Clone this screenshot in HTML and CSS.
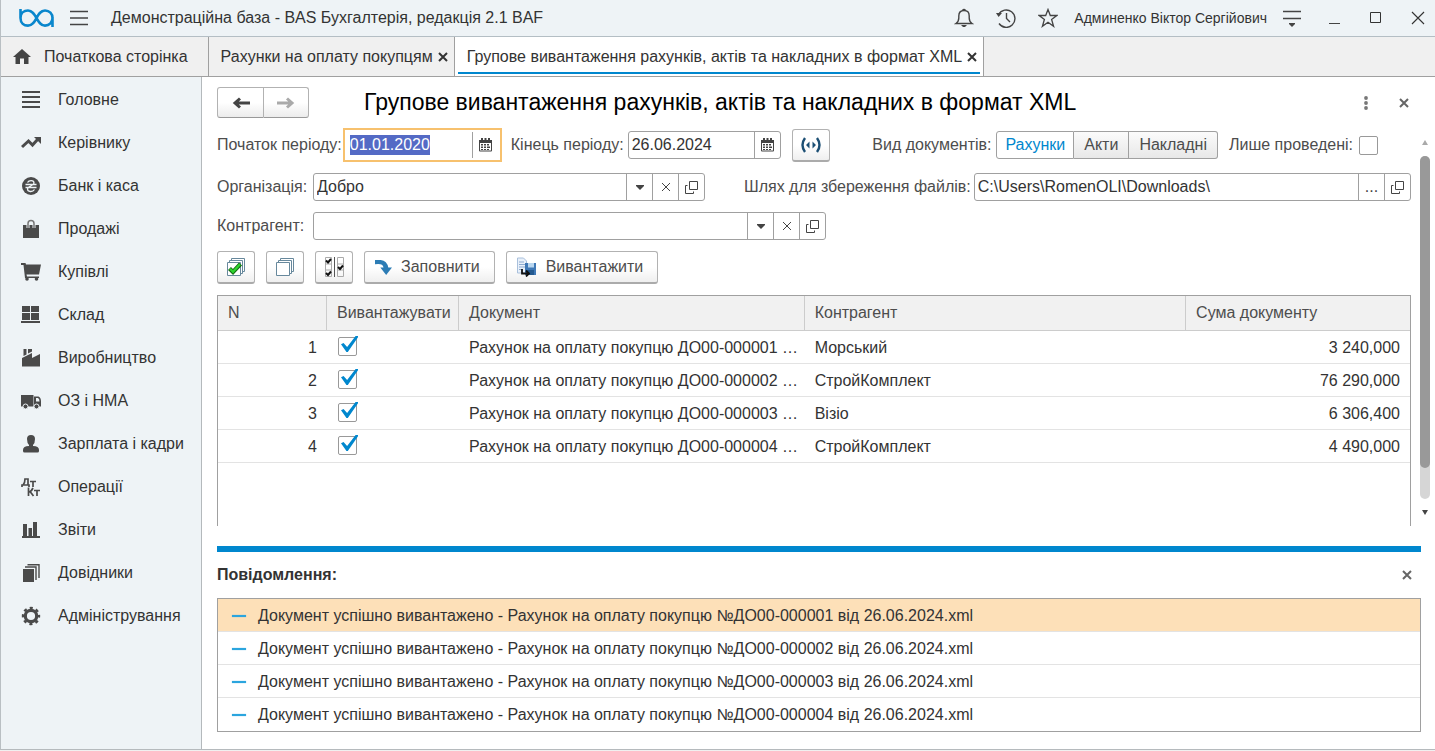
FILE: index.html
```html
<!DOCTYPE html>
<html lang="uk">
<head>
<meta charset="utf-8">
<title>Демонстраційна база - BAS Бухгалтерія, редакція 2.1 BAF</title>
<link rel="stylesheet" href="styles.css">
</head>
<body>
<svg class="sprite" aria-hidden="true">
  <symbol id="x" viewBox="0 0 10 10"><path d="M1 1l8 8M9 1l-8 8" fill="none" stroke="currentColor"/></symbol>
  <symbol id="down" viewBox="0 0 8 5"><path d="M0 0h8v1L4 5 0 1z" fill="currentColor"/></symbol>
  <symbol id="open" viewBox="0 0 13 13"><path d="M4.500 .5h8v8h-8zM2.500 4.500h-2v8h8v-2" fill="none" stroke="currentColor"/></symbol>
  <symbol id="cal" viewBox="0 0 13 14"><path d="M0 2h13v10.500q0 1-1 1H1q-1 0-1-1z" fill="#444"/><path d="M2 0h2v3H2zM5.500 0h2v3h-2zM9 0h2v3H9z" fill="#444"/><path d="M1 5h11v7.500H1z" fill="#fff"/><path d="M5 6h2v1.500H5zM8 6h2v1.500H8zM2 8.500h2V10H2zM5 8.500h2V10H5zM8 8.500h3V10H8zM2 6h2v1.500H2zM2 11h2v1H2zM5 11h2v1H5zM8 11h2v1H8z" fill="#444"/></symbol>
</svg>
<div class="window">
  <header class="titlebar">
    <svg class="logo" width="35" height="18" viewBox="0 0 35 18" fill="none" stroke="#0a87cd" stroke-width="2.600"><path d="M1.500 0v9c0 5 3.500 7.600 7.500 7.600C18 16.600 17 1.500 26 1.500c4.500 0 7.500 3.300 7.500 7.500s-3 7.600-7.500 7.600C17.500 16.600 17.500 1.500 9 1.500 5 1.500 1.500 4 1.500 9M33.500 8v10"/></svg>
    <button class="plain menu" aria-label="Меню"><svg width="18" height="16" viewBox="0 0 18 16"><path d="M0 1.500h18M0 8h18M0 14.500h18" stroke="#444" stroke-width="1.400"/></svg></button>
    <h1 class="app-title">Демонстраційна база - BAS Бухгалтерія, редакція 2.1 BAF</h1>
    <div class="tools">
      <button class="plain" aria-label="Сповіщення"><svg width="20" height="20" viewBox="0 0 20 20" fill="none" stroke="#444" stroke-width="1.400"><path d="M8.500 2.500q1.500-2 3 0M2 15.500h16q-2.800-2-2.800-5.500V8q0-5.500-5.200-5.500T4.800 8v2Q4.800 13.500 2 15.500z"/><path d="M7 17h6l-2 2H9z" fill="#444" stroke="none"/></svg></button>
      <button class="plain" aria-label="Історія"><svg width="20" height="20" viewBox="0 0 20 20" fill="none" stroke="#444" stroke-width="1.400"><path d="M2.600 6.500A8.700 8.700 0 1 1 3 15.500M10.500 5v5.500l3.500 3.500"/><path d="M0 5h6L2.600 9z" fill="#444" stroke="none"/></svg></button>
      <button class="plain" aria-label="Обране"><svg width="20" height="20" viewBox="0 0 20 20" fill="none" stroke="#444" stroke-width="1.300"><path d="M10 1.500l2.300 6h6.500l-5.200 4 2 6.800L10 14.200l-5.600 4.100 2-6.800-5.200-4h6.500z"/></svg></button>
      <span class="user">Админенко Віктор Сергійович</span>
      <button class="plain" aria-label="Налаштування"><svg width="18" height="18" viewBox="0 0 18 18"><path d="M0 2.500h18M0 9.500h18" stroke="#444" stroke-width="1.400"/><path d="M6 14h6v1l-3 3-3-3z" fill="#444"/></svg></button>
    </div>
    <div class="win-buttons">
      <button class="plain" aria-label="Згорнути"><svg width="11" height="12" viewBox="0 0 11 12"><path d="M0 11.500h11" stroke="#444"/></svg></button>
      <button class="plain" aria-label="Розгорнути"><svg width="11" height="11" viewBox="0 0 11 11"><path d="M.5.5h10v10H.5z" fill="none" stroke="#333"/></svg></button>
      <button class="plain" aria-label="Закрити"><svg width="14" height="14" viewBox="0 0 10 10"><path d="M.7.7l8.600 8.600M9.300.7L.7 9.300" stroke="#333" stroke-width=".8"/></svg></button>
    </div>
  </header>

  <nav class="tabs">
    <a class="tab home" href="#"><svg width="18" height="15" viewBox="0 0 18 15"><path d="M9 0l9 8h-2.500v7H11V9.500H7V15H2.500V8H0z" fill="#444"/></svg>Початкова сторінка</a>
    <a class="tab" href="#">Рахунки на оплату покупцям<svg class="tab-x" width="10" height="10"><use href="#x"/></svg></a>
    <a class="tab active" href="#">Групове вивантаження рахунків, актів та накладних в формат XML<svg class="tab-x" width="10" height="10"><use href="#x"/></svg></a>
  </nav>

  <div class="body">
    <nav class="sidebar">
      <a href="#"><svg width="20" height="20" viewBox="0 0 20 20"><path d="M1 2h18M1 7h18M1 12h18M1 17h18" stroke="#4a4a4a" stroke-width="2"/></svg>Головне</a>
      <a href="#"><svg width="20" height="20" viewBox="0 0 20 20"><path d="M1 14l6.500-6 4 4L17 6" fill="none" stroke="#4a4a4a" stroke-width="3"/><path d="M13 4h7v7z" fill="#4a4a4a"/></svg>Керівнику</a>
      <a href="#"><svg width="20" height="20" viewBox="0 0 20 20"><circle cx="10" cy="10" r="9" fill="#4a4a4a"/><path d="M6.500 6.500C8 4 13 4 13 7c0 3-6.500 3-6.500 6s5 3.500 7 .5M4.500 8.500h11M4.500 11.500h11" fill="none" stroke="#eef3f6" stroke-width="1.300"/></svg>Банк і каса</a>
      <a href="#"><svg width="20" height="20" viewBox="0 0 20 20"><path d="M2 6h16v13H2z" fill="#4a4a4a"/><path d="M7 9V4.500q0-3 3-3t3 3V9" fill="none" stroke="#eef3f6" stroke-width="3"/><path d="M7 9V4.500q0-3 3-3t3 3V9" fill="none" stroke="#777" stroke-width="1.500"/></svg>Продажі</a>
      <a href="#"><svg width="20" height="20" viewBox="0 0 20 20"><path d="M0 1h4.500l.5 1.500h15L18 12.500H5.500l.5 2h12V16H4L2.500 3H0z" fill="#4a4a4a"/><circle cx="6" cy="17" r="1.800" fill="#4a4a4a"/><circle cx="15.500" cy="17" r="1.800" fill="#4a4a4a"/></svg>Купівлі</a>
      <a href="#"><svg width="20" height="20" viewBox="0 0 20 20"><path d="M1 1h8v6H1zM10 1h8v6h-8zM1 8h8v7H1zM10 8h8v7h-8zM0 16h19v2H0z" fill="#4a4a4a"/></svg>Склад</a>
      <a href="#"><svg width="20" height="20" viewBox="0 0 20 20"><path d="M1 18.500V10l10-5v5l8-4v12.500zM2.500 1h3v5.500l-3 1.500zM7 1h4v2.500L7 5.500z" fill="#4a4a4a"/></svg>Виробництво</a>
      <a href="#"><svg width="20" height="20" viewBox="0 0 20 20"><path d="M0 4h12.500v11.500H0zM13 5.500h4.500q2.500 1 2.500 5v5h-7z" fill="#4a4a4a"/><path d="M15 7h2q1.500.5 1.500 3.500H15z" fill="#eef3f6"/><g fill="#4a4a4a" stroke="#eef3f6"><circle cx="4.500" cy="15.500" r="2.500"/><circle cx="15.500" cy="15.500" r="2.500"/></g></svg>ОЗ і НМА</a>
      <a href="#"><svg width="20" height="20" viewBox="0 0 20 20"><path d="M6 5q0-4 4-4t4 4-2 6v1q6 0 6 4v1q0 1.500-1.500 1.500h-13Q2 18.500 2 17v-1q0-4 6-4v-1Q6 9 6 5z" fill="#4a4a4a"/></svg>Зарплата і кадри</a>
      <a href="#"><svg width="20" height="20" viewBox="0 0 20 20" fill="none" stroke="#4a4a4a" stroke-width="1.700"><path d="M1 10V8h7v2M2 8q2-2 2-6h3v6M9 4.500h6M12 4.500V10M7.500 10.500V19M8 15q2 0 4-4M9 14.500l3.500 4.500M13 13.500h6M16 13.500V19"/></svg>Операції</a>
      <a href="#"><svg width="20" height="20" viewBox="0 0 20 20"><path d="M2 4h4v12H2zM7.500 8h3.500v8H7.500zM12 2h4v14h-4zM1 16h18v2H1z" fill="#4a4a4a"/></svg>Звіти</a>
      <a href="#"><svg width="20" height="20" viewBox="0 0 20 20"><path d="M2 6h11v13H2z" fill="#4a4a4a"/><path d="M4 4h11v13M6.500 1.800H18V15" fill="none" stroke="#4a4a4a" stroke-width="1.400"/></svg>Довідники</a>
      <a href="#"><svg width="20" height="20" viewBox="0 0 20 20" fill="none" stroke="#4a4a4a"><circle cx="10" cy="10" r="5.700" stroke-width="3.200"/><circle cx="10" cy="10" r="8" stroke-width="2.400" stroke-dasharray="3.100 3.183" stroke-dashoffset="1.550"/></svg>Адміністрування</a>
    </nav>

    <main class="main">
      <div class="heading">
        <div class="nav-pair">
          <button aria-label="Назад"><svg width="18" height="12" viewBox="0 0 18 12" fill="none" stroke="#444" stroke-width="3"><path d="M3 6h15M8 1.500L3 6l5 4.500"/></svg></button>
          <button aria-label="Вперед"><svg width="18" height="12" viewBox="0 0 18 12" fill="none" stroke="#aaa" stroke-width="3"><path d="M0 6h15M10 1.500L15 6l-5 4.500"/></svg></button>
        </div>
        <h2>Групове вивантаження рахунків, актів та накладних в формат XML</h2>
        <button class="plain more" aria-label="Ще"><svg width="4" height="14" viewBox="0 0 4 14" fill="#777"><circle cx="2" cy="2" r="1.900"/><circle cx="2" cy="7" r="1.900"/><circle cx="2" cy="12" r="1.900"/></svg></button>
        <button class="plain form-x" aria-label="Закрити форму"><svg width="10" height="10"><use href="#x"/></svg></button>
      </div>

      <div class="pane">
        <form class="form" onsubmit="return false">
          <div class="row first">
            <label for="from">Початок періоду:</label>
            <div class="field date focused"><input id="from" value="01.01.2020"><button type="button" aria-label="Календар"><svg width="13" height="14"><use href="#cal"/></svg></button></div>
            <label class="to-label" for="to">Кінець періоду:</label>
            <div class="field date"><input id="to" value="26.06.2024"><button type="button" aria-label="Календар"><svg width="13" height="14"><use href="#cal"/></svg></button></div>
            <button class="btn square period" type="button" aria-label="Вибрати період"><svg width="20" height="16" viewBox="0 0 20 16"><path d="M4 1Q-1 8 4 15M16 1q5 7 0 14" fill="none" stroke="#1c4f74" stroke-width="2.400"/><path d="M8.500 4.500v7L5 8zM11.500 4.500v7L15 8z" fill="#1c4f74"/></svg></button>
            <span class="kind" id="kind">Вид документів:</span>
            <div class="segmented" role="group" aria-labelledby="kind"><button type="button" class="on">Рахунки</button><button type="button">Акти</button><button type="button">Накладні</button></div>
            <label class="posted" for="posted">Лише проведені:</label>
            <input class="check" type="checkbox" id="posted">
          </div>
          <div class="row">
            <label class="side" for="org">Організація:</label>
            <div class="field org"><input id="org" value="Добро"><button type="button" aria-label="Список"><svg width="8" height="5"><use href="#down"/></svg></button><button type="button" aria-label="Очистити"><svg width="10" height="10"><use href="#x"/></svg></button><button type="button" aria-label="Відкрити"><svg width="13" height="13"><use href="#open"/></svg></button></div>
            <label class="path-label" for="path">Шлях для збереження файлів:</label>
            <div class="field path"><input id="path" value="C:\Users\RomenOLI\Downloads\"><button type="button" aria-label="Вибрати">...</button><button type="button" aria-label="Відкрити"><svg width="13" height="13"><use href="#open"/></svg></button></div>
          </div>
          <div class="row">
            <label class="side" for="partner">Контрагент:</label>
            <div class="field partner"><input id="partner" value=""><button type="button" aria-label="Список"><svg width="8" height="5"><use href="#down"/></svg></button><button type="button" aria-label="Очистити"><svg width="10" height="10"><use href="#x"/></svg></button><button type="button" aria-label="Відкрити"><svg width="13" height="13"><use href="#open"/></svg></button></div>
          </div>
          <div class="toolbar">
            <button class="btn square" type="button" aria-label="Позначити все"><svg width="18" height="18" viewBox="0 0 18 18" fill="#fff" stroke="#67889c"><path d="M4.500 .5h13v13h-13z"/><path d="M2.500 2.500h13v13h-13z"/><path d="M.5 4.500h13v13H.5z"/><path d="M2.500 10.500l3.500 3.500 7.500-8" fill="none" stroke="#136b13" stroke-width="4.200"/><path d="M3 10.800L6 13.800l7-7.500" fill="none" stroke="#2fd42f" stroke-width="2.200"/></svg></button>
            <button class="btn square" type="button" aria-label="Зняти позначки"><svg width="18" height="18" viewBox="0 0 18 18" fill="#fff" stroke="#67889c"><path d="M4.500 .5h13v13h-13z"/><path d="M2.500 2.500h13v13h-13z"/><path d="M.5 4.500h13v13H.5z"/></svg></button>
            <button class="btn square" type="button" aria-label="Інвертувати"><svg width="19" height="20" viewBox="0 0 19 20" fill="none" stroke="#aaa"><path d="M.5 .5h6v19h-6zM.5 7h6M.5 13h6M12.500 .5h6v19h-6zM12.500 7h6M12.500 13h6"/><path d="M9.500 0v20" stroke="#555"/><path d="M1 3.500L3 5.500 6 2M1 16l2 2 3-3.500M13 10l2 2 3-3.500" stroke="#111" stroke-width="2"/></svg></button>
            <button class="btn" type="button"><svg width="17" height="15" viewBox="0 0 16 14"><path d="M0 0Q11-1.500 12.500 7H16l-5.500 7L5 7h3Q7.500 2.800 0 4z" fill="#2c7cb5"/></svg>Заповнити</button>
            <button class="btn" type="button"><svg width="20" height="20" viewBox="0 0 20 20"><path d="M.5 1h6l3 3v12h-9z" fill="#e8f0fa" stroke="#a9c0dc"/><path d="M2 5h5M2 7.500h6M2 10h6M2 12.500h4" stroke="#8eabd0"/><path d="M8 6h11v12H8z" fill="#3f78b6"/><path d="M11 6h6v4.500h-6z" fill="#b9d6ef"/><path d="M10 13h7v5h-7z" fill="#23598f"/><path d="M5 12v4.500h6M9 13.500l3 3-3 3" fill="none" stroke="#111" stroke-width="1.800"/></svg>Вивантажити</button>
          </div>
          <div class="table-box">
            <table>
              <colgroup><col class="c-n"><col class="c-check"><col class="c-doc"><col class="c-partner"><col class="c-sum"></colgroup>
              <thead><tr><th>N</th><th>Вивантажувати</th><th>Документ</th><th>Контрагент</th><th>Сума документу</th></tr></thead>
              <tbody>
                <tr><td class="num">1</td><td><input class="check" type="checkbox" checked aria-label="Вивантажувати 1"></td><td>Рахунок на оплату покупцю ДО00-000001 …</td><td>Морський</td><td class="num">3 240,000</td></tr>
                <tr><td class="num">2</td><td><input class="check" type="checkbox" checked aria-label="Вивантажувати 2"></td><td>Рахунок на оплату покупцю ДО00-000002 …</td><td>СтройКомплект</td><td class="num">76 290,000</td></tr>
                <tr><td class="num">3</td><td><input class="check" type="checkbox" checked aria-label="Вивантажувати 3"></td><td>Рахунок на оплату покупцю ДО00-000003 …</td><td>Візіо</td><td class="num">6 306,400</td></tr>
                <tr><td class="num">4</td><td><input class="check" type="checkbox" checked aria-label="Вивантажувати 4"></td><td>Рахунок на оплату покупцю ДО00-000004 …</td><td>СтройКомплект</td><td class="num">4 490,000</td></tr>
              </tbody>
            </table>
          </div>
        </form>
        <div class="scroll" aria-hidden="true">
          <svg width="6" height="5" viewBox="0 0 6 5"><path d="M3 0l3 5H0z" fill="#aaa"/></svg>
          <div class="track"><div class="thumb"></div></div>
          <svg width="6" height="5" viewBox="0 0 6 5"><path d="M0 0h6L3 5z" fill="#444"/></svg>
        </div>
      </div>

      <section class="messages">
        <div class="msg-head"><h3>Повідомлення:</h3><button class="plain form-x" aria-label="Закрити повідомлення"><svg width="10" height="10"><use href="#x"/></svg></button></div>
        <ul>
          <li class="selected">Документ успішно вивантажено - Рахунок на оплату покупцю №ДО00-000001 від 26.06.2024.xml</li>
          <li>Документ успішно вивантажено - Рахунок на оплату покупцю №ДО00-000002 від 26.06.2024.xml</li>
          <li>Документ успішно вивантажено - Рахунок на оплату покупцю №ДО00-000003 від 26.06.2024.xml</li>
          <li>Документ успішно вивантажено - Рахунок на оплату покупцю №ДО00-000004 від 26.06.2024.xml</li>
        </ul>
      </section>
    </main>
  </div>
</div>
<script src="script.js"></script>
</body>
</html>
```
FILE: styles.css
```css
* { box-sizing: border-box; }
body {
  margin: 0;
  font: 16px/20px "Liberation Sans", Arial, sans-serif;
  color: #333;
  background: #f0f0f0;
}
.sprite { position: absolute; width: 0; height: 0; }
svg { display: block; flex: none; }
button, input { font: inherit; color: inherit; }
button { padding: 0; }
h1, h2, h3 { margin: 0; font-weight: normal; }
a { color: inherit; text-decoration: none; }
.plain { border: 0; background: none; display: flex; }

.window {
  display: flex;
  flex-direction: column;
  height: calc(100vh - 1px);
  border-left: 1px solid #b9bfc3;
  border-bottom: 1px solid #b5babd;
}

.titlebar {
  display: flex;
  align-items: center;
  height: 37px;
  padding: 0 10px 1px 18px;
  background: #eef3f6;
  border-bottom: 1px solid #b4bec4;
}
.menu { margin: 0 23px 0 16px; }
.app-title { flex: 1; font-size: 16px; }
.tools { display: flex; align-items: center; gap: 22px; }
.user { font-size: 14px; margin: 0 -6px; }
.win-buttons { display: flex; align-items: center; gap: 30px; margin-left: 28px; }

.tabs {
  display: flex;
  height: 40px;
  background: #f0f0f0;
  border-bottom: 1px solid #a0a0a0;
}
.tab {
  display: flex;
  align-items: center;
  padding: 0 6px 0 12px;
  border-right: 1px solid #a0a0a0;
  white-space: nowrap;
}
.home { gap: 13px; padding-right: 20px; }
.tab-x { margin-left: 5px; stroke-width: 2; }
.active {
  position: relative;
  background: #fff;
}
.active::after {
  content: "";
  position: absolute;
  left: 3px;
  right: 3px;
  bottom: 2px;
  height: 2px;
  background: #0087ce;
}

.body { display: flex; flex: 1; min-height: 0; }
.sidebar {
  width: 201px;
  flex: none;
  padding-top: 1px;
  background: #eef3f6;
  border-right: 1px solid #b4b9bc;
}
.sidebar a {
  display: flex;
  align-items: center;
  gap: 17px;
  height: 43px;
  padding-left: 20px;
}

.main {
  flex: 1;
  min-width: 0;
  display: flex;
  flex-direction: column;
  padding: 10px 14px 17px 15px;
  background: #fff;
}
.heading { display: flex; align-items: center; margin-bottom: 10px; }
.heading h2 { flex: 1; margin-left: 55px; font-size: 23px; line-height: 28px; padding-bottom: 2px; color: #000; white-space: nowrap; }
.nav-pair { display: flex; }
.nav-pair button {
  display: grid;
  place-items: center;
  width: 47px;
  height: 31px;
  border: 1px solid #b2b2b2;
  border-bottom-color: #999;
  border-radius: 3px 0 0 3px;
  background: linear-gradient(#fff 50%, #ececec);
}
.nav-pair button + button { width: 45px; border-left-width: 0; border-radius: 0 3px 3px 0; }
.more { margin-right: 31px; }
.form-x { color: #666; stroke-width: 2; }
.heading .form-x { margin-right: 12px; }

.pane { display: flex; flex: 1; min-height: 0; margin-right: -9px; gap: 9px; }
.form {
  flex: 1;
  min-width: 0;
  display: flex;
  flex-direction: column;
  gap: 11px;
}
.row { display: flex; align-items: center; color: #4d4d4d; white-space: nowrap; }
.side { width: 96px; }
.field {
  display: flex;
  height: 28px;
  border: 1px solid #a0a0a0;
  border-radius: 3px;
  background: #fff;
  color: #333;
}
.field input {
  flex: 1;
  min-width: 0;
  padding: 0 0 0 3px;
  border: 0;
  outline: 0;
  background: none;
}
.field input::selection { color: #fff; background: rgba(82, 104, 196, .99); }
.field button {
  display: grid;
  place-items: center;
  width: 26px;
  border: 0;
  border-left: 1px solid #a0a0a0;
  background: none;
  color: #444;
}
.date { width: 153px; }
.first { height: 34px; }
.focused {
  width: 159px;
  height: 34px;
  margin-left: 1px;
  padding: 2px;
  border: 2px solid #f7c16e;
  border-radius: 0;
}
.to-label { margin: 0 4px 0 9px; }
.period { margin-left: 11px; }
.kind { margin: 0 5px 0 auto; }
.posted { margin: 0 6px 0 11px; }
.first > .check { margin-right: 33px; }
.org { width: 392px; }
.path-label { margin: 0 3px 0 39px; }
.path { flex: 1; }
.partner { width: 513px; }

.segmented { display: flex; height: 28px; }
.segmented button {
  padding: 0 10px;
  border: 1px solid #a0a0a0;
  border-left-width: 0;
  background: linear-gradient(#fbfbfb, #e8e8e8);
}
.segmented button:first-child { border-left-width: 1px; border-radius: 3px 0 0 3px; padding: 0 8px; }
.segmented button:last-child { border-radius: 0 3px 3px 0; }
.segmented .on { background: #fff; color: #0087ce; }

.check {
  appearance: none;
  width: 19px;
  height: 19px;
  margin: 0;
  border: 1px solid #999;
  border-radius: 2px;
  background: #fff;
  position: relative;
  display: block;
}
td .check { margin: 0 0 2px 1px; }
.check:checked::after {
  content: "";
  position: absolute;
  left: 2px;
  top: -2px;
  width: 17px;
  height: 16px;
  background: #0087ce;
  clip-path: polygon(0 52%, 15% 43%, 36% 68%, 86% 0, 100% 0, 100% 8%, 40% 100%, 32% 100%);
}

.toolbar { display: flex; gap: 11px; }
.btn {
  display: flex;
  align-items: center;
  gap: 9px;
  height: 33px;
  padding: 0 14px 0 10px;
  border: 1px solid #b2b2b2;
  border-bottom: 2px solid #ababab;
  border-radius: 3px;
  background: linear-gradient(#fff 50%, #efefef);
  color: #4d4d4d;
}
.square { width: 38px; padding: 0; justify-content: center; }

.table-box {
  flex: 1;
  min-height: 0;
  border: 1px solid #a0a0a0;
  border-bottom: 0;
}
table { width: 100%; table-layout: fixed; border-collapse: separate; border-spacing: 0; }
th, td { padding: 0 10px; text-align: left; white-space: nowrap; overflow: hidden; }
th {
  height: 35px;
  font-weight: normal;
  color: #4d4d4d;
  background: #f1f1f1;
  border-right: 1px solid #ccc;
  border-bottom: 1px solid #ccc;
}
th:last-child { border-right: 0; }
td { height: 33px; padding-top: 1px; border-bottom: 1px solid #e3e3e3; }
td.num { text-align: right; }
.c-n { width: 109px; }
.c-check { width: 132px; }
.c-doc { width: 29%; }
.c-partner { width: 32%; }

.scroll {
  display: flex;
  flex-direction: column;
  align-items: center;
  width: 10px;
  padding: 12px 0 11px;
  gap: 11px;
}
.track { flex: 1; width: 10px; border-radius: 5px; background: #d6d6d6; }
.thumb { height: 91%; border-radius: 5px; background: #999; }

.messages { margin-top: 20px; border-top: 6px solid #0087ce; }
.msg-head { display: flex; align-items: center; justify-content: space-between; height: 46px; padding-right: 9px; }
.msg-head h3 { font-size: 16px; font-weight: bold; }
.messages ul {
  margin: 0;
  padding: 0;
  list-style: none;
  border: 1px solid #a0a0a0;
}
.messages li {
  display: flex;
  align-items: center;
  gap: 12px;
  height: 33px;
  padding: 1px 0 0 14px;
  border-bottom: 1px solid #e3e3e3;
}
.messages li:last-child { border-bottom: 0; }
.messages li::before { content: ""; width: 14px; height: 2px; background: #2ba5de; box-shadow: 0 0 1px #2ba5de; }
.selected { background: #fde0b8; }
```
FILE: script.js
```js
const from = document.getElementById("from");
from.focus();
from.select();
```
